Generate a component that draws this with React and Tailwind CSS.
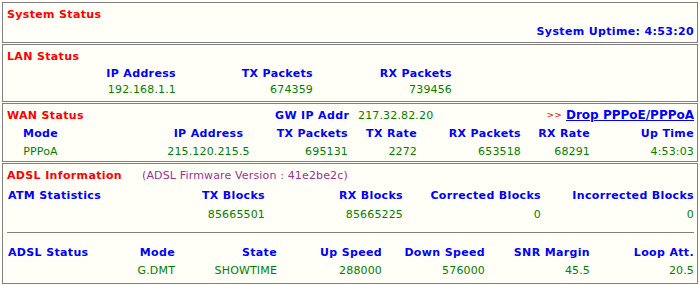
const font = { fontFamily: '"DejaVu Sans", Verdana, sans-serif' };

const lan = [
  { label: "IP Address", value: "192.168.1.1", w: "w-[173px]" },
  { label: "TX Packets", value: "674359", w: "w-[137px]" },
  { label: "RX Packets", value: "739456", w: "w-[139px]" },
];

// WAN columns: [label, value, width, align]
const wan = [
  ["Mode", "PPPoA", "w-[75px]", "text-center"],
  ["", "", "w-[72px]", "text-center"],
  ["IP Address", "215.120.215.5", "w-[117px]", "text-center"],
  ["TX Packets", "695131", "w-[81px]", "text-right"],
  ["TX Rate", "2272", "w-[69px]", "text-right"],
  ["RX Packets", "653518", "w-[104px]", "text-right"],
  ["RX Rate", "68291", "w-[69px]", "text-right"],
  ["Up Time", "4:53:03", "w-[104px]", "text-right"],
];

const atm = [
  ["TX Blocks", "85665501", "w-[125px]"],
  ["RX Blocks", "85665225", "w-[138px]"],
  ["Corrected Blocks", "0", "w-[138px]"],
  ["Incorrected Blocks", "0", "w-[153px]"],
];

const adsl = [
  ["Mode", "G.DMT", "w-[55px]"],
  ["State", "SHOWTIME", "w-[102px]"],
  ["Up Speed", "288000", "w-[105px]"],
  ["Down Speed", "576000", "w-[103px]"],
  ["SNR Margin", "45.5", "w-[105px]"],
  ["Loop Att.", "20.5", "w-[104px]"],
];

const head = "font-bold tracking-[0.35px] text-[#0000ff]";

function Box({ children, className = "" }) {
  return (
    <div className={"border border-[#808080] bg-[#fffff7] " + className}>
      {children}
    </div>
  );
}

function Title({ children }) {
  return (
    <span className="font-bold tracking-[0.35px] text-[#ff0000]">{children}</span>
  );
}

export default function App() {
  return (
    <div
      style={font}
      className="flex h-[285px] w-[700px] flex-col gap-px bg-[#fffff7] px-[2px] pt-[2px] text-[11px] leading-none tracking-[0.15px]"
    >
      {/* system */}
      <Box className="flex h-[41px] flex-col pt-[3px]">
        <div className="flex h-[17px] items-center pl-[4px]">
          <Title>System Status</Title>
        </div>
        <div className={"flex h-[16px] items-center justify-end pr-[3px] " + head}>
          System Uptime: 4:53:20
        </div>
      </Box>

      {/* lan */}
      <Box className="flex h-[58px] flex-col pt-[2px]">
        <div className="flex h-[18px] items-center pl-[4px]">
          <Title>LAN Status</Title>
        </div>
        <div className={"flex h-[16px] items-center " + head}>
          {lan.map((c) => (
            <div key={c.label} className={c.w + " text-right"}>
              {c.label}
            </div>
          ))}
        </div>
        <div className="flex h-[16px] items-center text-[#008000]">
          {lan.map((c) => (
            <div key={c.label} className={c.w + " text-right"}>
              {c.value}
            </div>
          ))}
        </div>
      </Box>

      {/* wan */}
      <Box className="flex h-[59px] flex-col pt-[2px]">
        <div className="flex h-[18px] items-center pl-[4px] pr-[3px]">
          <div className="w-[268px]">
            <Title>WAN Status</Title>
          </div>
          <div className={"w-[83px] " + head}>GW IP Addr</div>
          <div className="flex-1 text-[#008000]">217.32.82.20</div>
          <span className="mr-[4px] text-[9px] text-[#ff0000]">&gt;&gt;</span>
          <a
            href="#"
            className="text-[12px] font-bold tracking-normal text-[#0000ff] underline"
          >
            Drop PPPoE/PPPoA
          </a>
        </div>
        <div className={"flex h-[18px] items-center " + head}>
          {wan.map(([l, , w, a], i) => (
            <div key={i} className={w + " " + a}>
              {l}
            </div>
          ))}
        </div>
        <div className="flex h-[18px] items-center text-[#008000]">
          {wan.map(([, v, w, a], i) => (
            <div key={i} className={w + " " + a}>
              {v}
            </div>
          ))}
        </div>
      </Box>

      {/* adsl */}
      <Box className="flex h-[121px] flex-col pt-[2px]">
        <div className="flex h-[18px] items-center pl-[4px]">
          <div className="w-[135px]">
            <Title>ADSL Information</Title>
          </div>
          <span className="text-[#993399]">(ADSL Firmware Version : 41e2be2c)</span>
        </div>
        <div className={"mt-[2px] flex h-[18px] items-center " + head}>
          <div className="w-[137px] pl-[5px]">ATM Statistics</div>
          {atm.map(([l, , w]) => (
            <div key={l} className={w + " text-right"}>
              {l}
            </div>
          ))}
        </div>
        <div className="mt-px flex h-[18px] items-center text-[#008000]">
          <div className="w-[137px]" />
          {atm.map(([l, v, w]) => (
            <div key={l} className={w + " text-right"}>
              {v}
            </div>
          ))}
        </div>
        <div className="ml-[4px] mr-[3px] mt-[9px] h-px bg-[#808080]" />
        <div className={"mt-[10px] flex h-[18px] items-center " + head}>
          <div className="w-[117px] pl-[5px]">ADSL Status</div>
          {adsl.map(([l, , w]) => (
            <div key={l} className={w + " text-right"}>
              {l}
            </div>
          ))}
        </div>
        <div className="flex h-[18px] items-center text-[#008000]">
          <div className="w-[117px]" />
          {adsl.map(([l, v, w]) => (
            <div key={l} className={w + " text-right"}>
              {v}
            </div>
          ))}
        </div>
      </Box>
    </div>
  );
}
